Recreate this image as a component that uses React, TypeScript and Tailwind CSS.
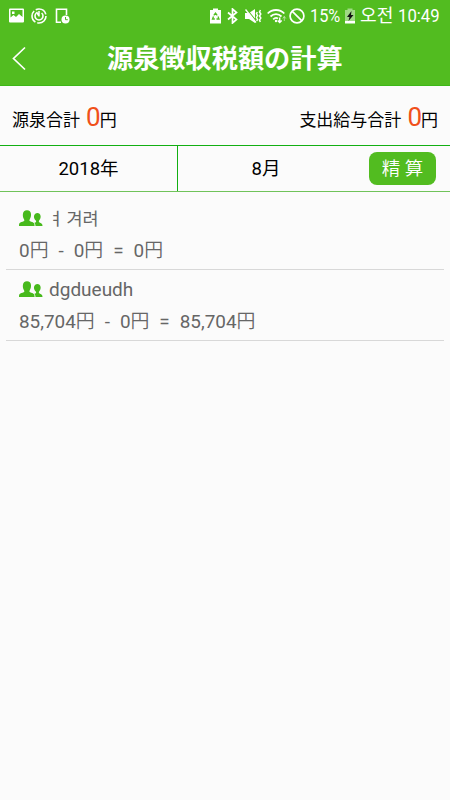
import type { ReactNode } from 'react';

const entries = [
  { name: 'ㅕ 겨려', nameClass: 'text-[17.500px] -ml-px [word-spacing:-2px]', total: '0', tax: '0', net: '0' },
  { name: 'dgdueudh', nameClass: 'text-[19px]', total: '85,704', tax: '0', net: '85,704' },
];

function Icon({ w, h = 16, className, children }: { w: number; h?: number; className?: string; children: ReactNode }) {
  return (
    <svg width={w} height={h} viewBox={`0 0 ${w} ${h}`} fill="none" stroke="currentColor" className={`flex-shrink-0 ${className ?? ''}`}>
      {children}
    </svg>
  );
}

function StatusBar() {
  return (
    <div className="flex h-[31px] items-center pl-[9px]">
      <Icon w={15}>
        <path fillRule="evenodd" fill="currentColor" stroke="none" d="M1 .5h13a1 1 0 0 1 1 1v12a1 1 0 0 1-1 1H1a1 1 0 0 1-1-1v-12a1 1 0 0 1 1-1ZM1.500 2v7.500l3-2.500 2.500 2 3-2.500L13.500 9V2Z" />
        <path fill="currentColor" stroke="none" d="M3 3.500h2.500V6H3ZM1 10.500L4.500 8l2.500 1.500L10 6l3.500 3.500v4.500H1Z" />
      </Icon>
      <Icon w={16} className="ml-[7px]">
        <circle cx="8" cy="8" r="7" strokeWidth="1.600" strokeDasharray="12.700 2" />
        <path d="M5.400 5a4 4 0 1 0 5.200 0" strokeWidth="1.600" />
        <path d="M8 3v5.500M5.500 4L8 8" strokeWidth="1.500" />
      </Icon>
      <Icon w={15} className="ml-[8px]">
        <path d="M6 14.200H1.500V1.300h10V7" strokeWidth="1.600" />
        <circle cx="10.500" cy="11.500" r="4" fill="currentColor" stroke="none" />
        <path d="M10.500 9v2.700h2.300" stroke="#52bc20" />
      </Icon>
      <Icon w={11} className="ml-[140px]">
        <path d="M0 2h3V0.500h5V2h3v13.500H0Z" fill="currentColor" stroke="none" />
        <path d="M3.800 7.300L5.500 5l1.700 2.300M8 8.500l1 2.500H6.500M4.800 11H2.500l1-2.500" stroke="#52bc20" strokeWidth="1.300" />
      </Icon>
      <Icon w={11} className="ml-[6px]">
        <path d="M1 4.500l8.500 7L5.500 15V1l4 3.500-8.500 7" strokeWidth="1.700" />
      </Icon>
      <Icon w={17} className="ml-[7px]">
        <path d="M0 5h4l6-4v14l-6-4H0Z" fill="currentColor" stroke="none" />
        <path d="M2 1.500l10 12.500" stroke="#52bc20" strokeWidth="1.100" />
        <path d="M0.500 1.500l10.500 13" strokeWidth="1.400" />
        <path d="M12.300 4l-.8 1.500 1 2-1 2 1 2-.8 1.500M15.500 2l-1 2 1.300 2-1.300 2 1.300 2-1.300 2 .8 2" strokeWidth="1.500" />
      </Icon>
      <Icon w={20} className="ml-[5px]">
        <path d="M0.700 5.500c4.500-4.700 12.100-4.700 16.600 0M3.500 8.500c3.200-3.200 7.800-3.200 11 0M6.200 11.300c1.800-1.800 3.300-1.800 4.800-.8" strokeWidth="1.800" />
        <circle cx="9" cy="13" r="1.200" fill="currentColor" stroke="none" />
        <path d="M12.700 9.500V14M10.700 12.500l2 2 2-2" strokeWidth="1.500" />
        <path d="M17.300 13V8.500M15.800 10.500l1.500-2 1.500 2" strokeOpacity="0.500" />
      </Icon>
      <Icon w={16} className="ml-[2px]">
        <circle cx="8" cy="8" r="6.900" strokeWidth="1.700" />
        <path d="M3.300 3.300l9.400 9.400" strokeWidth="1.700" />
      </Icon>
      <div className="ml-[5px] h-5 w-[31px] text-[19px] leading-5">
        <span className="inline-block origin-left scale-x-[0.860]">15%</span>
      </div>
      <Icon w={10} className="ml-[4px]">
        <path d="M0 2h2.500V0.500h5V2H10v11H0Z" fill="currentColor" fillOpacity="0.450" stroke="none" />
        <path d="M0 13h10v2.500H0Z" fill="currentColor" stroke="none" />
        <path d="M6.500 3L2 9h2.500L3.500 13 8.500 7H6Z" fill="#111" stroke="none" />
      </Icon>
      <div className="ml-[5px] h-5 w-[38px] whitespace-nowrap text-[18.500px] leading-5">
        <span className="inline-block origin-left scale-x-[0.980]">오전</span>
      </div>
      <div className="h-5 w-[42px] text-[19px] leading-5">
        <span className="inline-block origin-left scale-x-[0.880]">10:49</span>
      </div>
    </div>
  );
}

function People() {
  return (
    <svg width="24" height="17" viewBox="0 0 24 17" fill="#47b91c" className="flex-shrink-0">
      <path d="M16.500 16c0-2-.8-2.700-1.300-3 1.500-.6 2.300-.8 1.800-2.200-1.500-1.500-2.300-3.200-2-4.800.4-1.900 1.800-2.900 3.400-2.900s3 1 3.200 3c.2 1.900-.4 3.300-1.500 4.500-.5.900-.3 1.700.9 2.100 1.800.7 2.500 1.300 2.500 3.300Z" />
      <path d="M0 16c0-2.800.7-3.400 3.500-4.200 2-.6 2.300-1.500 1.400-2.800C4 7.800 3.700 6 3.900 4.100 4.100 1.600 5.500.3 8 .3s3.900 1.300 4 3.800c.1 1.900-.2 3.600-1.100 4.900-.9 1.300-.6 2.200 1.300 2.800 2.700.8 3.400 1.400 3.400 4.200Z" />
    </svg>
  );
}

function Yen({ value }: { value: string }) {
  return (
    <span>
      {value}
      <span className="font-[350]">円</span>
    </span>
  );
}

function Total({ label, value }: { label: string; value: string }) {
  return (
    <div className="flex items-baseline whitespace-nowrap">
      {label}
      <span className="ml-[6px] mr-[-1px] text-[26px] leading-8 text-[#f0501a]">{value}</span>円
    </div>
  );
}

export default function App() {
  return (
    <div className="h-[800px] w-[450px] overflow-hidden bg-[#fbfbfb] font-['Roboto','Noto_Sans_CJK_JP',sans-serif] text-black">
      <header className="h-[86px] border-b border-[#3db817] bg-[#52bc20] text-white">
        <StatusBar />
        <div className="flex h-[55px] items-center">
          <Icon w={14} h={25} className="ml-[12px]">
            <path d="M13 1.500L1.500 12.500 13 23.500" strokeWidth="1.700" />
          </Icon>
          <h1 className="ml-[81px] whitespace-nowrap text-[26.200px] font-bold leading-[54px]">源泉徴収税額の計算</h1>
        </div>
      </header>

      <div className="flex h-[59px] items-center justify-between px-[12px] pt-[4px] text-[17px]">
        <Total label="源泉合計" value="0" />
        <Total label="支出給与合計" value="0" />
      </div>

      <div className="flex h-[47px] border-b border-t border-b-[#70c35a] border-t-[#12af12] text-[18.500px]">
        <div className="flex w-[178px] items-center justify-center border-r border-[#12af12] pt-[2px]">2018年</div>
        <div className="flex w-[176px] items-center justify-center pt-[2px]">8月</div>
        <button className="ml-[15px] mt-[6px] h-[33px] w-[67px] whitespace-pre rounded-lg bg-[#52bc20] text-[18.500px] font-[350] leading-[32px] text-white">精 算</button>
      </div>

      <ul className="mx-[6px] text-[19px] text-[#666]">
        {entries.map(({ name, nameClass, total, tax, net }) => (
          <li key={name} className="h-[71px] border-b border-[#d8d8d8] first:h-[78px] first:pt-[7px]">
            <div className="flex h-[38px] items-center pl-[13px]">
              <People />
              <div className="ml-[6px] pt-[2px]">
                <span className={nameClass}>{name}</span>
              </div>
            </div>
            <div className="flex h-[28px] items-center whitespace-pre pl-[13px] text-[18.900px] [word-spacing:0.300px]">
              <Yen value={total} />
              <span>{'  -  '}</span>
              <Yen value={tax} />
              <span>{'  =  '}</span>
              <Yen value={net} />
            </div>
          </li>
        ))}
      </ul>
    </div>
  );
}
